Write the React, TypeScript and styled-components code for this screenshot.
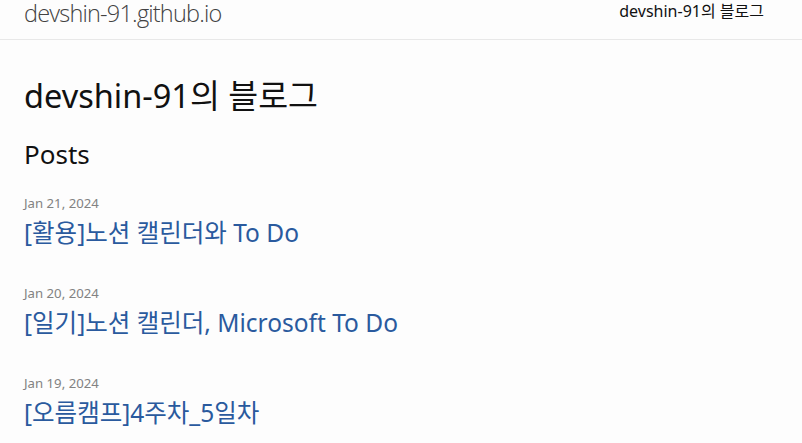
import * as React from 'react';
import styled, { createGlobalStyle } from 'styled-components';

const GlobalStyles = createGlobalStyle`
  html, body {
    margin: 0;
    padding: 0;
    background: #fdfdfd;
  }
  body {
    font-family: 'Noto Sans', 'Noto Sans CJK KR', sans-serif;
    color: #111;
    font-size: 16px;
    line-height: 1.5;
  }
  ul {
    margin: 0;
    padding: 0;
    list-style: none;
  }
`;

const Header = styled.header`
  height: 39px;
  border-bottom: 1px solid #e8e8e8;
`;

const Wrapper = styled.div`
  padding: 0 38px 0 24px;
`;

const HeaderInner = styled(Wrapper)`
  display: flex;
  justify-content: space-between;
  align-items: flex-start;
`;

const SiteTitle = styled.a`
  font-family: 'Open Sans', 'Noto Sans', sans-serif;
  font-size: 23.5px;
  font-weight: 300;
  line-height: 27px;
  color: #424242;
  letter-spacing: -0.8px;
  text-decoration: none;
`;

const NavLink = styled.a`
  font-size: 16px;
  line-height: 22px;
  color: #111;
  text-decoration: none;
`;

const Main = styled(Wrapper)`
  padding-top: 36px;
`;

const PageHeading = styled.h1`
  margin: 0;
  font-size: 32.5px;
  font-weight: 400;
  line-height: 40px;
`;

const ListHeading = styled.h2`
  margin: 18px 0 0;
  font-size: 26px;
  font-weight: 400;
  line-height: 40px;
`;

const PostItem = styled.li`
  margin-top: 19px;
  & + & {
    margin-top: 30px;
  }
`;

const PostMeta = styled.span`
  display: block;
  font-size: 13.2px;
  line-height: 20px;
  color: #828282;
`;

const PostLink = styled.a`
  display: block;
  font-size: 24.5px;
  line-height: 40px;
  color: #2a5a9e;
  text-decoration: none;
`;

const posts = [
  { date: 'Jan 21, 2024', title: '[활용]노션 캘린더와 To Do' },
  { date: 'Jan 20, 2024', title: '[일기]노션 캘린더, Microsoft To Do' },
  { date: 'Jan 19, 2024', title: '[오름캠프]4주차_5일차' },
];

const App: React.FC = () => (
  <>
    <GlobalStyles />
    <Header>
      <HeaderInner>
        <SiteTitle href="#">devshin-91.github.io</SiteTitle>
        <NavLink href="#">devshin-91의 블로그</NavLink>
      </HeaderInner>
    </Header>
    <Main>
      <PageHeading>devshin-91의 블로그</PageHeading>
      <ListHeading>Posts</ListHeading>
      <ul>
        {posts.map((p) => (
          <PostItem key={p.date}>
            <PostMeta>{p.date}</PostMeta>
            <PostLink href="#">{p.title}</PostLink>
          </PostItem>
        ))}
      </ul>
    </Main>
  </>
);

export default App;
